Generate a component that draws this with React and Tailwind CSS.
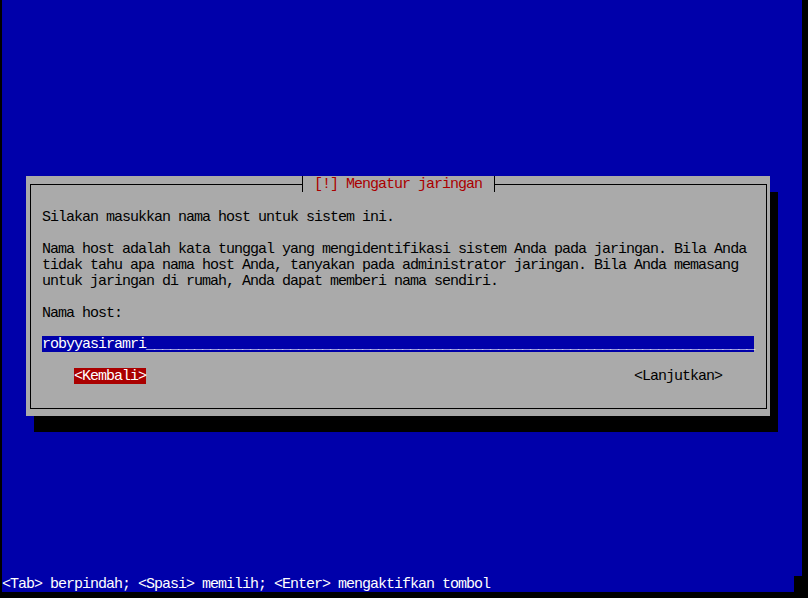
import React from 'react';

const FONT = { fontFamily: '"Liberation Mono", "DejaVu Sans Mono", monospace' };

const Row = ({ children, className = '' }) => (
  <div className={`h-[16px] whitespace-pre ${className}`}>{children}</div>
);

export default function App() {
  const host = 'robyyasiramri';
  const filler = '_'.repeat(89 - host.length);

  return (
    <div
      className="w-[808px] h-[598px] bg-black overflow-hidden text-[15px] leading-[16px] tracking-[-1px]"
      style={FONT}
    >
      <div className="ml-[2px] flex flex-col">
        {/* screen */}
        <div className="w-[800px] h-[576px] bg-[#0000aa] pt-[176px] pl-[24px]">
          {/* dialog */}
          <div className="relative w-[744px] h-[240px] bg-[#aaaaaa] pt-[8px] pl-[4px] pr-[3px] pb-[7px] shadow-[8px_16px_0_0_#000]">
            <div className="h-full border border-black pt-[7px] pl-[11px] text-black">
              <Row />
              <Row className="pt-[2px]">Silakan masukkan nama host untuk sistem ini.</Row>
              <Row />
              <Row className="pt-[2px]">Nama host adalah kata tunggal yang mengidentifikasi sistem Anda pada jaringan. Bila Anda</Row>
              <Row className="pt-[2px]">tidak tahu apa nama host Anda, tanyakan pada administrator jaringan. Bila Anda memasang</Row>
              <Row className="pt-[2px]">untuk jaringan di rumah, Anda dapat memberi nama sendiri.</Row>
              <Row />
              <Row className="pt-[2px]">Nama host:</Row>
              <Row />
              <div className="w-[712px] h-[16px] bg-[#0000aa] text-white whitespace-pre pt-[1px]">
                {host}
                {filler}
              </div>
              <Row />
              <div className="flex h-[16px] whitespace-pre">
                <span className="ml-[32px] w-[72px] h-[16px] bg-[#aa0000] text-white pt-[1px]">&lt;Kembali&gt;</span>
                <span className="ml-[488px] w-[88px] pt-[1px]">&lt;Lanjutkan&gt;</span>
              </div>
              <Row />
            </div>

            {/* title over the top border */}
            <div className="absolute top-0 left-[276px] h-[16px] w-[193px] bg-[#aaaaaa] border-x border-black pl-[11px] pt-[1px] whitespace-pre text-[#aa0000]">
              [!] Mengatur jaringan
            </div>
          </div>
        </div>

        {/* status line */}
        <div className="w-[792px] h-[16px] bg-[#0000aa] text-white whitespace-pre pt-[1px]">
          &lt;Tab&gt; berpindah; &lt;Spasi&gt; memilih; &lt;Enter&gt; mengaktifkan tombol
        </div>
      </div>
    </div>
  );
}
